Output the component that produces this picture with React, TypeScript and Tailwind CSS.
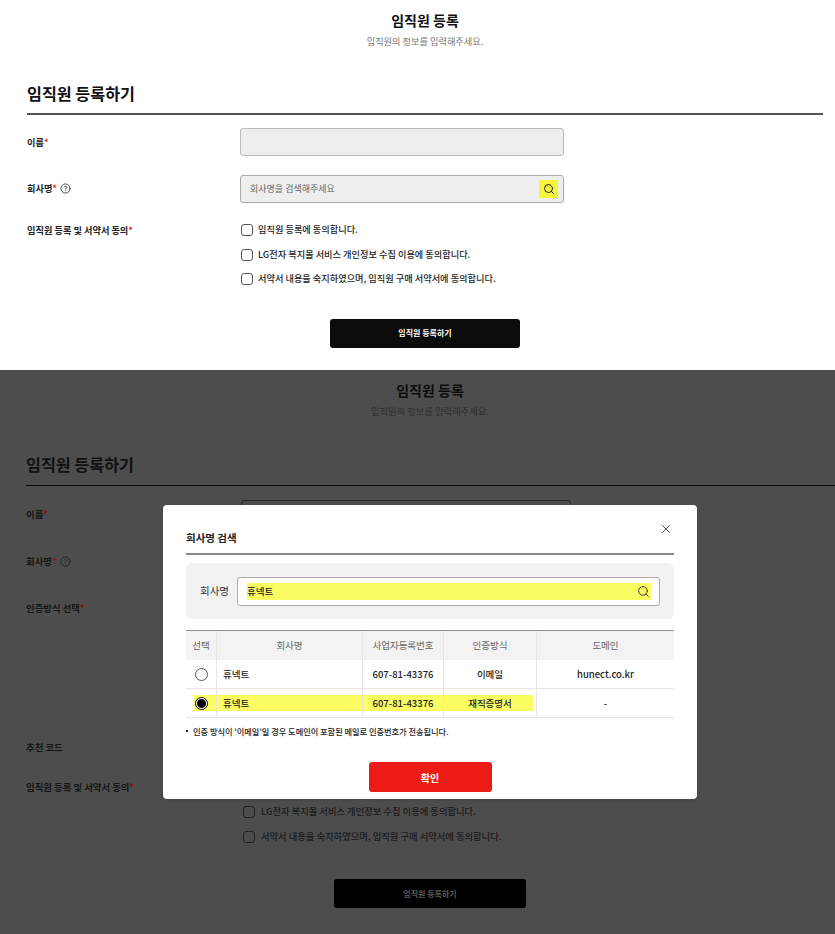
import { CircleHelp, Search, X } from 'lucide-react';

const font = { fontFamily: '"Noto Sans CJK KR", "Noto Sans", sans-serif' };

function Star({ dim }: { dim?: boolean }) {
    return <span className={dim ? 'text-[#8f1010]' : 'text-[#e8141c]'}>*</span>;
}

function AgreeRow({ text, dim }: { text: string; dim?: boolean }) {
    return (
        <div className="flex h-[24.5px] items-center gap-[5px]">
            <span
                className={`h-[12px] w-[12px] shrink-0 rounded-[3px] border-[1.5px] ${
                    dim ? 'border-[#222222]' : 'border-[#555555]'
                }`}
            />
            <span className={`font-medium ${dim ? 'ml-[1px] text-[9.3px] text-[#1a1a1a]' : 'text-[9.2px] text-[#222222]'}`}>
                {text}
            </span>
        </div>
    );
}

function RegisterForm() {
    return (
        <section className="h-[370px] bg-white pt-[11px]">
            <h1 className="pl-[15px] text-center text-[14px] font-bold leading-[18px] text-[#111111]">임직원 등록</h1>
            <p className="mt-[6px] pl-[15px] text-center text-[9.2px] leading-[12px] text-[#777777]">
                임직원의 정보를 입력해주세요.
            </p>

            <div className="ml-[27px] mr-[12px] mt-[34px] border-b-2 border-[#555555] pb-[8px]">
                <h2 className="text-[16.2px] font-bold leading-[24px] text-[#111111]">임직원 등록하기</h2>
            </div>

            <div className="ml-[27px] mt-[13px] flex h-[28px] items-center">
                <label className="w-[213px] pt-[1px] text-[9.2px] font-bold text-[#222222]">
                    이름<Star />
                </label>
                <div className="h-[28px] w-[324px] rounded-[3px] border border-[#bbbbbb] bg-[#eeeeee]" />
            </div>

            <div className="ml-[27px] mt-[19px] flex h-[28px] items-center">
                <label className="flex w-[213px] items-center gap-[3px] text-[9.2px] font-bold text-[#222222]">
                    <span>
                        회사명<Star />
                    </span>
                    <CircleHelp size={11} strokeWidth={1.7} className="text-[#222222]" />
                </label>
                <div className="flex h-[28px] w-[324px] items-center justify-between rounded-[3px] border border-[#aaaaaa] bg-[#eeeeee] pl-[9px] pr-[5px]">
                    <span className="text-[9px] text-[#666666]">회사명을 검색해주세요</span>
                    <span className="flex h-[18px] w-[19px] items-center justify-center bg-[#f4f53c]">
                        <Search size={12} strokeWidth={2} className="text-[#222222]" />
                    </span>
                </div>
            </div>

            <div className="ml-[27px] mt-[15px] flex">
                <label className="w-[214px] pt-[5px] text-[9.2px] font-bold leading-[14px] text-[#222222]">
                    임직원 등록 및 서약서 동의<Star />
                </label>
                <div className="flex flex-col">
                    <AgreeRow text="임직원 등록에 동의합니다." />
                    <AgreeRow text="LG전자 복지몰 서비스 개인정보 수집 이용에 동의합니다." />
                    <AgreeRow text="서약서 내용을 숙지하였으며, 임직원 구매 서약서에 동의합니다." />
                </div>
            </div>

            <div className="mt-[27px] flex justify-center pl-[15px]">
                <button className="h-[29px] w-[190px] rounded-[3px] bg-[#0c0c0c] text-[8px] font-bold text-white">
                    임직원 등록하기
                </button>
            </div>
        </section>
    );
}

function DimmedForm() {
    return (
        <section className="h-[564px] bg-[#4d4d4d] pt-[11px]">
            <h1 className="pl-[25px] text-center text-[14px] font-bold leading-[18px] text-[#0d0d0d]">임직원 등록</h1>
            <p className="mt-[6px] pl-[25px] text-center text-[9.3px] leading-[12px] text-[#2e2e2e]">
                임직원의 정보를 입력해주세요.
            </p>

            <div className="ml-[26px] mt-[35px] border-b border-[#0a0a0a] pb-[9px]">
                <h2 className="text-[16.2px] font-bold leading-[24px] text-[#111111]">임직원 등록하기</h2>
            </div>

            <div className="ml-[26px] text-[9.4px] font-bold text-[#161616]">
                <div className="mt-[14px] flex h-[28px] items-center">
                    <label className="w-[215px]">
                        이름<Star dim />
                    </label>
                    <div className="h-[28px] w-[330px] rounded-[3px] border border-[#2a2a2a]" />
                </div>
                <div className="mt-[19px] flex h-[28px] items-center gap-[3px]">
                    <span>
                        회사명<Star dim />
                    </span>
                    <CircleHelp size={11} strokeWidth={1.5} className="text-[#1c1c1c]" />
                </div>
                <div className="mt-[19px] h-[28px] leading-[28px]">
                    인증방식 선택<Star dim />
                </div>
                <div className="mt-[111px] h-[28px] leading-[28px]">추천 코드</div>
                <div className="mt-[12px] h-[28px] leading-[28px]">
                    임직원 등록 및 서약서 동의<Star dim />
                </div>
            </div>

            <div className="-mt-[1px] ml-[243px] flex flex-col">
                <AgreeRow dim text="LG전자 복지몰 서비스 개인정보 수집 이용에 동의합니다." />
                <AgreeRow dim text="서약서 내용을 숙지하였으며, 임직원 구매 서약서에 동의합니다." />
            </div>

            <div className="mt-[30px] flex justify-center pl-[25px]">
                <button className="h-[29px] w-[192px] rounded-[3px] bg-black text-[8px] font-bold text-[#5c5c5c]">
                    임직원 등록하기
                </button>
            </div>
        </section>
    );
}

const columns = 'grid grid-cols-[31px_146px_81px_93px_1fr]';
const cell = 'flex items-center justify-center border-r border-[#e6e6e6] last:border-r-0';

function ResultRow({ auth, domain, selected }: { auth: string; domain: string; selected?: boolean }) {
    return (
        <div
            className={`relative text-[9.5px] font-medium text-[#222222] ${columns} ${
                selected ? 'h-[29px] border-t border-[#e6e6e6]' : 'h-[28px]'
            }`}
        >
            {selected && <span className="absolute left-[8px] top-[6px] h-[16px] w-[339px] bg-[#fbfd62]" />}
            <div className={`relative ${cell}`}>
                <span
                    className={`flex h-[13px] w-[13px] items-center justify-center rounded-full border bg-white ${
                        selected ? 'border-black' : 'border-[#555555]'
                    }`}
                >
                    {selected && <span className="h-[9px] w-[9px] rounded-full bg-black" />}
                </span>
            </div>
            <div className={`relative justify-start! pl-[6px] ${cell}`}>휴넥트</div>
            <div className={`relative ${cell}`}>607-81-43376</div>
            <div className={`relative ${cell}`}>{auth}</div>
            <div className={`relative ${cell}`}>{domain}</div>
        </div>
    );
}

function CompanyModal() {
    return (
        <div className="absolute left-[163px] top-[505px] h-[294px] w-[534px] rounded-[4px] bg-white px-[23px] shadow-sm">
            <button className="absolute right-[24px] top-[17px] text-[#333333]">
                <X size={14} strokeWidth={1.4} />
            </button>
            <div className="border-b-2 border-[#8a8a8a] pb-[7px] pt-[25px]">
                <h3 className="text-[10.5px] font-bold leading-[16px] text-[#222222]">회사명 검색</h3>
            </div>

            <div className="mt-[8px] flex h-[56px] items-center rounded-[6px] bg-[#f2f2f2] pl-[14px] pr-[14px]">
                <label className="w-[37px] text-[10.5px] text-[#333333]">회사명</label>
                <div className="flex h-[29px] flex-1 items-center rounded-[3px] border border-[#aaaaaa] bg-white pl-[9px] pr-[8px]">
                    <div className="flex h-[17px] flex-1 items-center justify-between bg-[#fbfd62] pr-[1px]">
                        <span className="text-[9.5px] font-medium text-[#222222]">휴넥트</span>
                        <Search size={13} strokeWidth={1.7} className="text-[#333333]" />
                    </div>
                </div>
            </div>

            <div className="mt-[11px] border-b border-t border-[#e6e6e6] border-t-[#8f8f8f]">
                <div className={`h-[29px] bg-[#f3f3f3] text-[9.5px] text-[#666666] ${columns}`}>
                    <div className={cell}>선택</div>
                    <div className={cell}>회사명</div>
                    <div className={cell}>사업자등록번호</div>
                    <div className={cell}>인증방식</div>
                    <div className={cell}>도메인</div>
                </div>
                <ResultRow auth="이메일" domain="hunect.co.kr" />
                <ResultRow auth="재직증명서" domain="-" selected />
            </div>

            <p className="mt-[7px] flex items-center gap-[5px] text-[8.2px] font-medium leading-[12px] text-[#222222]">
                <span className="h-[2px] w-[2px] bg-[#222222]" />
                인증 방식이 '이메일'일 경우 도메인이 포함된 메일로 인증번호가 전송됩니다.
            </p>

            <div className="mt-[25px] flex justify-center">
                <button className="h-[30px] w-[123px] rounded-[3px] bg-[#ed1b16] text-[10px] font-bold text-white">
                    확인
                </button>
            </div>
        </div>
    );
}

export default function App() {
    return (
        <div className="relative h-[934px] w-full overflow-hidden" style={font}>
            <RegisterForm />
            <DimmedForm />
            <CompanyModal />
        </div>
    );
}
